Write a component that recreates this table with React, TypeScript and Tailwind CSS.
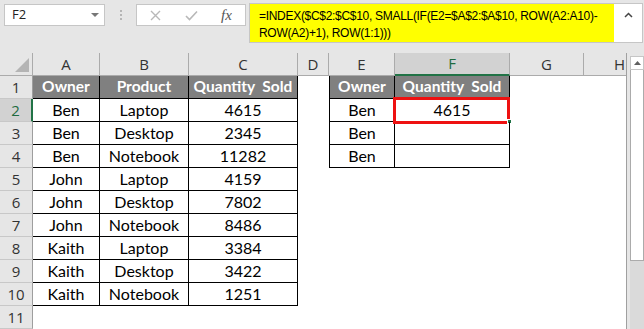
import React from 'react';

const dataRows: [string, string, string][] = [
  ['Ben', 'Laptop', '4615'],
  ['Ben', 'Desktop', '2345'],
  ['Ben', 'Notebook', '11282'],
  ['John', 'Laptop', '4159'],
  ['John', 'Desktop', '7802'],
  ['John', 'Notebook', '8486'],
  ['Kaith', 'Laptop', '3384'],
  ['Kaith', 'Desktop', '3422'],
  ['Kaith', 'Notebook', '1251'],
];

const lookupRows = ['Ben', 'Ben', 'Ben'];

const colHeaders = [
  { label: 'A', w: 'w-[67px]' },
  { label: 'B', w: 'w-[89px]' },
  { label: 'C', w: 'w-[109px]' },
  { label: 'D', w: 'w-[31px]' },
  { label: 'E', w: 'w-[66px]' },
  { label: 'F', w: 'w-[115px]' },
  { label: 'G', w: 'w-[74px]' },
  { label: 'H', w: 'w-[72px]' },
];

const FormulaBar = () => (
  <div className="flex h-[53px] items-start pt-[3px] font-['Open_Sans',sans-serif]">
    <div className="ml-[4px] mt-[1px] flex h-[22px] w-[101px] items-center justify-between border border-[#c6c6c6] bg-white pl-[7px] pr-[5px] text-[13px] text-[#222]">
      <span>F2</span>
      <svg width="8" height="4" viewBox="0 0 8 4">
        <path d="M0 0 L8 0 L4 4 Z" fill="#777" />
      </svg>
    </div>
    <div className="mt-[1px] flex h-[22px] w-[31px] flex-col items-center justify-center gap-[2px]">
      <span className="h-[2px] w-[2px] bg-[#b5b5b5]" />
      <span className="h-[2px] w-[2px] bg-[#b5b5b5]" />
      <span className="h-[2px] w-[2px] bg-[#b5b5b5]" />
    </div>
    <div className="mt-[1px] flex h-[22px] w-[110px] items-center border border-[#c6c6c6] bg-white">
      <svg className="ml-[13px]" width="11" height="11" viewBox="0 0 11 11">
        <path d="M1 1 L10 10 M10 1 L1 10" stroke="#b8b8b8" strokeWidth="1.4" />
      </svg>
      <svg className="ml-[24px]" width="13" height="11" viewBox="0 0 13 11">
        <path d="M1 6 L4.5 9.5 L12 1.5" stroke="#b8b8b8" strokeWidth="1.6" fill="none" />
      </svg>
      <span className="ml-[23px] font-['Liberation_Serif',serif] text-[15px] italic text-[#555]">
        fx
      </span>
    </div>
    <div className="ml-[3px] flex h-[40px] w-[394px] border border-[#c6c6c6] bg-white">
      <div className="h-full w-[364px] overflow-hidden whitespace-nowrap bg-[#ffff00] pl-[9px] pt-[4px] font-['Liberation_Sans',sans-serif] text-[12px] leading-[17px] tracking-[-0.3px] text-black">
        <div>=INDEX($C$2:$C$10, SMALL(IF(E2=$A$2:$A$10, ROW(A2:A10)-</div>
        <div>ROW(A2)+1), ROW(1:1)))</div>
      </div>
      <div className="flex flex-1 justify-center pt-[8px]">
        <svg width="9" height="6" viewBox="0 0 9 6">
          <path d="M1 5 L4.5 1.5 L8 5" stroke="#444" strokeWidth="1.5" fill="none" />
        </svg>
      </div>
    </div>
  </div>
);

const ColumnHeaderRow = () => (
  <div className="flex h-[23px] bg-[#e6e6e6] font-['Open_Sans',sans-serif] text-[15px] text-[#333]">
    <div className="relative h-full w-[33px] shrink-0 border-r border-b border-[#ababab]">
      <svg className="absolute right-[3px] bottom-[3px]" width="14" height="14" viewBox="0 0 14 14">
        <path d="M14 0 L14 14 L0 14 Z" fill="#b4b4b4" />
      </svg>
    </div>
    {colHeaders.map((c) =>
      c.label === 'F' ? (
        <div
          key={c.label}
          className={`${c.w} flex h-full shrink-0 items-center justify-center border-r border-b-2 border-r-[#ababab] border-b-[#217346] bg-[#d2d2d2] text-[#1e6b3f]`}
        >
          {c.label}
        </div>
      ) : (
        <div
          key={c.label}
          className={`${c.w} flex h-full shrink-0 items-center justify-center border-r border-b border-[#ababab]`}
        >
          {c.label}
        </div>
      ),
    )}
  </div>
);

const RowHeader = ({ n }: { n: number }) => {
  if (n === 2) {
    return (
      <div className="flex h-full w-[33px] shrink-0 items-center justify-center border-r-2 border-b border-r-[#217346] border-b-[#c8c8c8] bg-[#d2d2d2] font-['Open_Sans',sans-serif] text-[15px] text-[#1e6b3f]">
        {n}
      </div>
    );
  }
  return (
    <div className="flex h-full w-[33px] shrink-0 items-center justify-center border-r border-b border-r-[#9e9e9e] border-b-[#c8c8c8] bg-[#e6e6e6] font-['Open_Sans',sans-serif] text-[15px] text-[#333]">
      {n}
    </div>
  );
};

const cell = 'flex h-full shrink-0 items-center justify-center border-r border-b border-black';
const hdr = 'flex h-full shrink-0 items-center justify-center border-r border-b border-black bg-[#808080] text-[15.5px] font-bold text-white';

const Sheet = () => (
  <div className="w-[626px] shrink-0 overflow-hidden bg-white">
    <ColumnHeaderRow />
    <div className="flex h-[23px] font-['Lato',sans-serif] text-[16px]">
      <RowHeader n={1} />
      <div className={`${hdr} w-[67px]`}>Owner</div>
      <div className={`${hdr} w-[89px]`}>Product</div>
      <div className={`${hdr} w-[109px] whitespace-pre`}>Quantity  Sold</div>
      <div className="w-[31px] shrink-0" />
      <div className={`${hdr} w-[66px] border-l`}>Owner</div>
      <div className={`${hdr} w-[115px] whitespace-pre bg-[#00b050]`}>Quantity  Sold</div>
    </div>
    {dataRows.map((r, i) => {
      const n = i + 2;
      const k = i < lookupRows.length;
      return (
        <div key={n} className="flex h-[23px] font-['Lato',sans-serif] text-[16px] text-black">
          <RowHeader n={n} />
          <div className={`${cell} w-[67px]`}>{r[0]}</div>
          <div className={`${cell} w-[89px]`}>{r[1]}</div>
          <div className={`${cell} w-[109px]`}>{r[2]}</div>
          <div className="w-[31px] shrink-0" />
          {k && <div className={`${cell} w-[66px] border-l`}>{lookupRows[i]}</div>}
          {k && (
            <div className={`${cell} relative w-[115px]`}>
              {n === 2 && (
                <>
                  <span>4615</span>
                  <div className="absolute -top-[2px] -left-[2px] h-[27px] w-[117px] border-[3px] border-[#ee1111]" />
                  <div className="absolute -right-[3px] -bottom-[3px] h-[5px] w-[5px] border border-white bg-[#217346]" />
                </>
              )}
            </div>
          )}
        </div>
      );
    })}
    <div className="flex h-[23px]">
      <RowHeader n={11} />
    </div>
  </div>
);

const ScrollBar = () => (
  <div className="flex w-[18px] shrink-0 border-l border-[#a0a0a0] bg-[#e6e6e6] pl-[3px]">
    <div className="flex w-[14px] flex-col pt-[3px]">
      <div className="flex h-[14px] items-center justify-center border border-[#c6c6c6] bg-white">
        <svg width="7" height="4" viewBox="0 0 7 4">
          <path d="M0 4 L3.5 0 L7 4 Z" fill="#606060" />
        </svg>
      </div>
      <div className="h-[191px] border border-t-0 border-[#ababab] bg-white" />
      <div className="flex-1 bg-[#dadada]" />
    </div>
  </div>
);

export default function App() {
  return (
    <div className="h-[329px] w-[644px] overflow-hidden bg-[#e6e6e6]">
      <FormulaBar />
      <div className="flex h-[276px]">
        <Sheet />
        <ScrollBar />
      </div>
    </div>
  );
}
